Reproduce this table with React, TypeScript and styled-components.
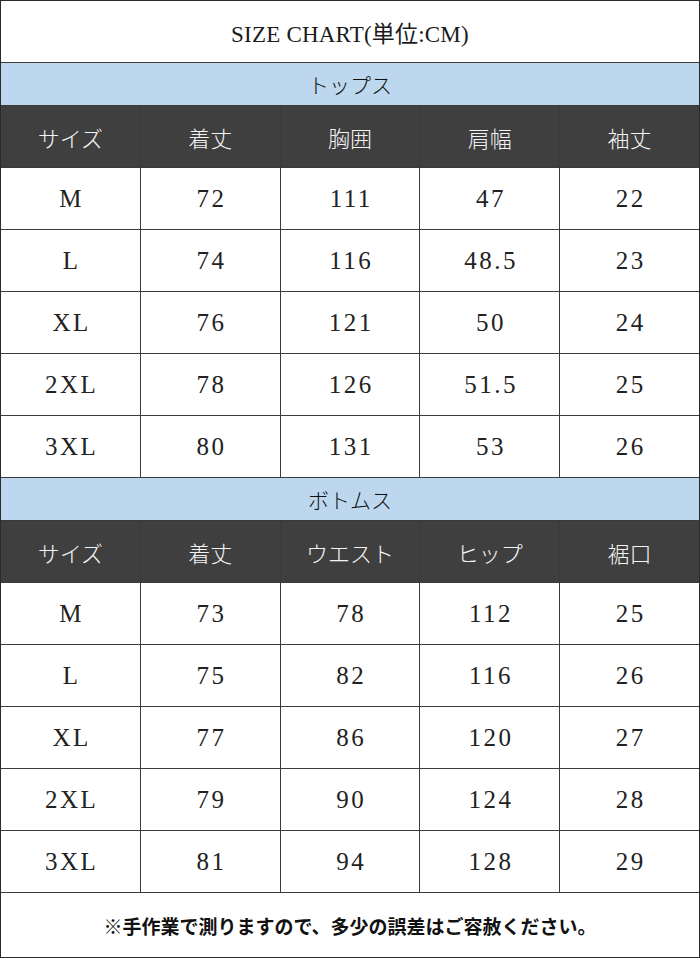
import React from 'react'
import styled, { createGlobalStyle } from 'styled-components'

const GlobalStyle = createGlobalStyle`
  html, body {
    margin: 0;
    padding: 0;
    background: #ffffff;
  }
  body {
    font-family: "Liberation Serif", "Noto Sans CJK JP", serif;
    color: #1e1e1e;
  }
`

const Sheet = styled.div`
  width: 700px;
  box-sizing: border-box;
  display: grid;
  grid-template-columns: repeat(5, 1fr);
  gap: 1px;
  background: #3a3a3a;
  border: 1px solid #2a2a2a;
`

const Title = styled.div`
  grid-column: 1 / -1;
  height: 61px;
  background: #ffffff;
  display: flex;
  align-items: center;
  justify-content: center;
  font-size: 23px;
  letter-spacing: 0.2px;
  color: #1a1a1a;
`

const Band = styled.div`
  grid-column: 1 / -1;
  height: 42px;
  background: #bdd7ee;
  display: flex;
  align-items: center;
  justify-content: center;
  font-family: "Noto Sans CJK JP", sans-serif;
  font-size: 21px;
  font-weight: 300;
  color: #111;
`

const HeadCell = styled.div`
  height: 61px;
  background: #3f3f3f;
  color: #f4f4f4;
  display: flex;
  align-items: center;
  justify-content: center;
  font-family: "Noto Sans CJK JP", sans-serif;
  font-size: 22px;
  font-weight: 300;
`

const Cell = styled.div`
  height: 61px;
  background: #ffffff;
  display: flex;
  align-items: center;
  justify-content: center;
  font-size: 25px;
  letter-spacing: 2.5px;
  padding-left: 2.5px;
  color: #222;
`

const Note = styled.div`
  grid-column: 1 / -1;
  height: 64px;
  background: #ffffff;
  display: flex;
  align-items: center;
  justify-content: center;
  font-family: "Noto Sans CJK JP", sans-serif;
  font-size: 19px;
  font-weight: 700;
  color: #111;
`

const tops = {
  name: 'トップス',
  head: ['サイズ', '着丈', '胸囲', '肩幅', '袖丈'],
  rows: [
    ['M', '72', '111', '47', '22'],
    ['L', '74', '116', '48.5', '23'],
    ['XL', '76', '121', '50', '24'],
    ['2XL', '78', '126', '51.5', '25'],
    ['3XL', '80', '131', '53', '26'],
  ],
}

const bottoms = {
  name: 'ボトムス',
  head: ['サイズ', '着丈', 'ウエスト', 'ヒップ', '裾口'],
  rows: [
    ['M', '73', '78', '112', '25'],
    ['L', '75', '82', '116', '26'],
    ['XL', '77', '86', '120', '27'],
    ['2XL', '79', '90', '124', '28'],
    ['3XL', '81', '94', '128', '29'],
  ],
}

const Section: React.FC<{ data: typeof tops }> = ({ data }) => (
  <>
    <Band>{data.name}</Band>
    {data.head.map((h, i) => (
      <HeadCell key={'h' + i}>{h}</HeadCell>
    ))}
    {data.rows.map((r, ri) =>
      r.map((v, ci) => <Cell key={ri + '-' + ci}>{v}</Cell>)
    )}
  </>
)

export default function App() {
  return (
    <>
      <GlobalStyle />
      <Sheet>
        <Title>SIZE CHART(単位:CM)</Title>
        <Section data={tops} />
        <Section data={bottoms} />
        <Note>※手作業で測りますので、多少の誤差はご容赦ください。</Note>
      </Sheet>
    </>
  )
}
